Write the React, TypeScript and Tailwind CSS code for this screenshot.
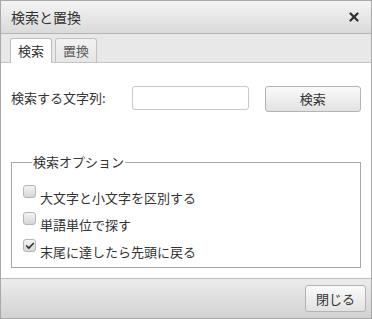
import { Check, X } from 'lucide-react';

const FONT = { fontFamily: '"Noto Sans CJK JP", "Noto Sans", sans-serif' };

const OPTIONS = [
  { label: '大文字と小文字を区別する', checked: false },
  { label: '単語単位で探す', checked: false },
  { label: '末尾に達したら先頭に戻る', checked: true },
];

function Box({ checked }: { checked: boolean }) {
  return (
    <span className="flex h-[13px] w-[13px] shrink-0 items-center justify-center rounded-[3px] border border-[#b5b5b5] bg-gradient-to-b from-[#f4f4f4] to-[#d6d6d6]">
      {checked && <Check size={10} strokeWidth={4} className="text-[#333]" />}
    </span>
  );
}

export default function App() {
  return (
    <div
      className="flex h-[319px] w-[372px] flex-col border border-[#a8a8a8] text-[13px] text-[#333]"
      style={FONT}
    >
      <div className="flex h-[33px] items-center justify-between border-b border-[#b4b4b4] bg-gradient-to-b from-[#f4f4f4] to-[#dadada] pl-[10px] pr-[10px]">
        <span className="text-[14px] text-[#333]">検索と置換</span>
        <X size={14} strokeWidth={4} className="text-[#333]" />
      </div>

      <div className="flex h-[29px] items-end gap-[3px] border-b border-[#c4c4c4] bg-[#e8e8e8] pl-[9px]">
        <div className="-mb-px flex h-[25px] w-[42px] items-center justify-center rounded-t-[3px] border border-b-0 border-[#bdbdbd] bg-white">
          検索
        </div>
        <div className="flex h-[24px] w-[42px] items-center justify-center rounded-t-[3px] border border-b-0 border-[#c2c2c2] bg-gradient-to-b from-[#f2f2f2] to-[#e6e6e6] text-[#555]">
          置換
        </div>
      </div>

      <div className="flex flex-1 flex-col bg-white px-[10px]">
        <div className="mt-[23px] flex items-start">
          <span className="mt-[2px] w-[122px]">検索する文字列:</span>
          <div className="h-[24px] w-[117px] rounded-[3px] border border-[#c8c8c8] bg-white" />
          <button className="ml-[16px] h-[26px] w-[97px] rounded-[3px] border border-[#b3b3b3] bg-gradient-to-b from-[#fafafa] to-[#e2e2e2] text-[13px] text-[#333]">
            検索
          </button>
        </div>

        <fieldset className="mt-[42px] h-[114px] w-[350px] border border-[#a8a8a8] px-[11px] pt-[15px]">
          <legend className="ml-[9px] px-px leading-[16px]">検索オプション</legend>
          <div className="flex flex-col gap-[7px]">
            {OPTIONS.map((o) => (
              <label key={o.label} className="flex items-start gap-[4px] leading-[15px]">
                <Box checked={o.checked} />
                <span className="mt-[5px]">{o.label}</span>
              </label>
            ))}
          </div>
        </fieldset>
      </div>

      <div className="flex h-[40px] items-center justify-end border-t border-[#bdbdbd] bg-gradient-to-b from-[#ececec] to-[#d2d2d2] pr-[5px]">
        <button className="h-[27px] w-[61px] rounded-[3px] border border-[#b3b3b3] bg-gradient-to-b from-[#fafafa] to-[#e2e2e2] text-[13px] text-[#333]">
          閉じる
        </button>
      </div>
    </div>
  );
}
